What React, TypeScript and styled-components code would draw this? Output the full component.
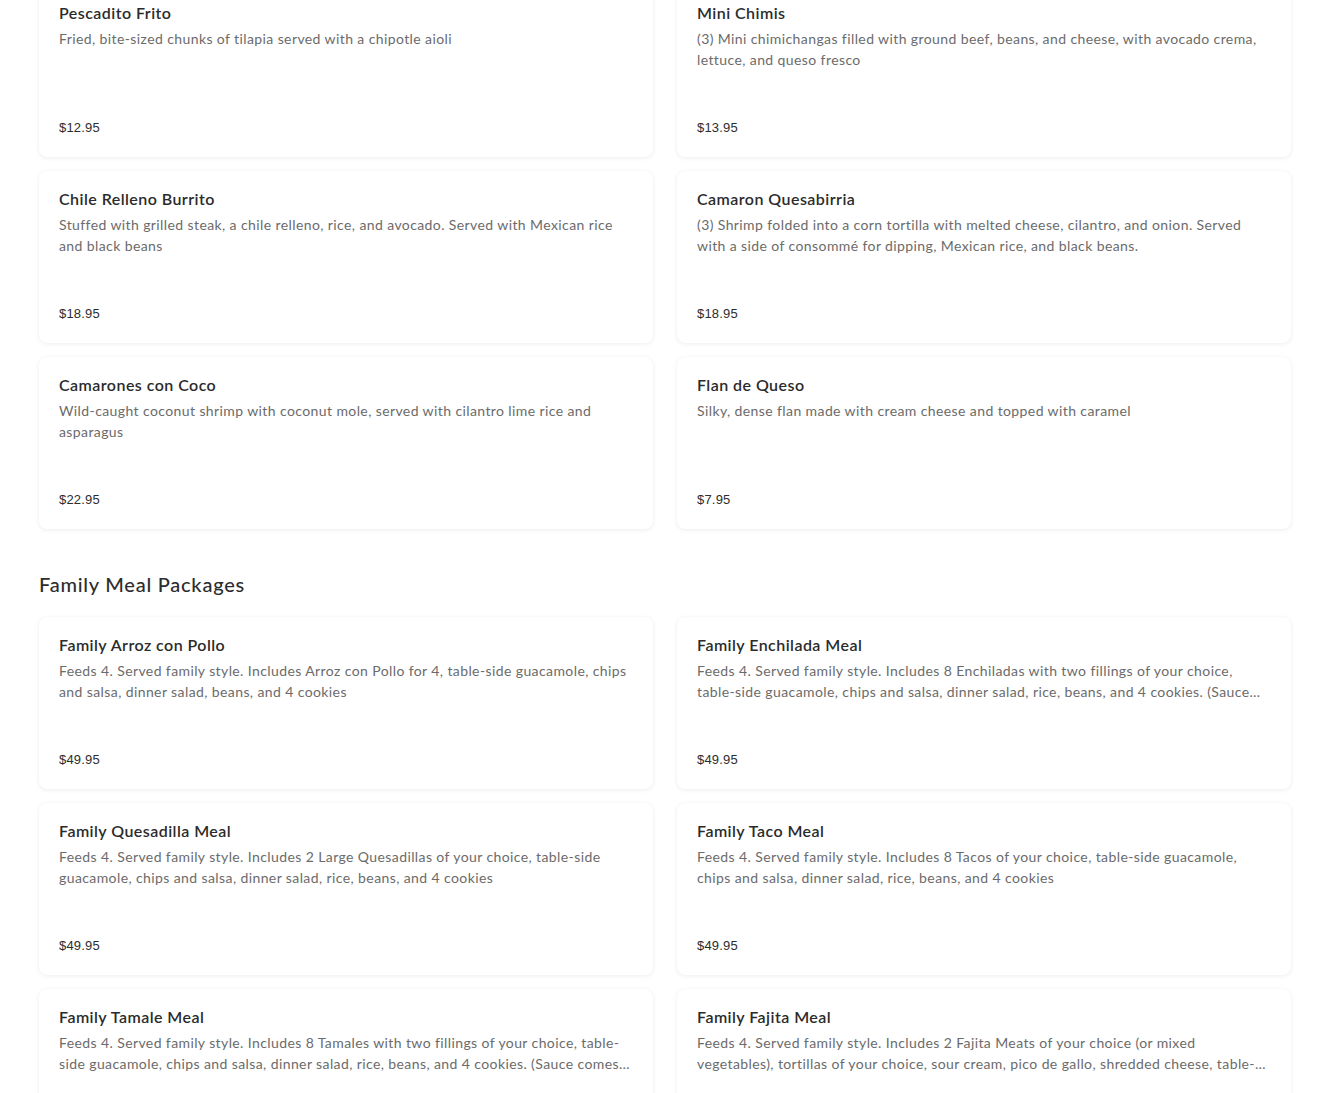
import React from "react";
import styled, { createGlobalStyle } from "styled-components";

const Global = createGlobalStyle`
  html, body { margin: 0; padding: 0; background: #ffffff; }
  body { font-family: "Lato", "Noto Sans", sans-serif; color: #2d2d2d; overflow: hidden; }
`;

const Page = styled.div`
  padding: 0 39px;
  margin-top: -15px;
  display: flex;
  flex-direction: column;
`;

const Section = styled.section`
  display: flex;
  flex-direction: column;
`;

const SectionTitle = styled.h2`
  margin: 41px 0 19px;
  font-size: 20px;
  line-height: 28px;
  font-weight: 500;
  letter-spacing: 0.75px;
  color: #2d2d2d;
`;

const Grid = styled.div`
  display: grid;
  grid-template-columns: 1fr 1fr;
  column-gap: 24px;
  row-gap: 14px;
`;

const Card = styled.div`
  height: 172px;
  box-sizing: border-box;
  padding: 16px 20px 19px;
  background: #fff;
  border-radius: 8px;
  box-shadow: 0 1px 5px rgba(0, 0, 0, 0.07), 0 0 1px rgba(0, 0, 0, 0.04);
  display: flex;
  flex-direction: column;
`;

const Title = styled.div`
  font-size: 16px;
  line-height: 24px;
  font-weight: 600;
  letter-spacing: 0.45px;
  color: #2b2b2b;
`;

const Desc = styled.div`
  margin-top: 3px;
  font-size: 14px;
  line-height: 21px;
  letter-spacing: 0.4px;
  color: #6b6b6b;
  display: -webkit-box;
  -webkit-line-clamp: 2;
  -webkit-box-orient: vertical;
  overflow: hidden;
`;

const Price = styled.div`
  margin-top: auto;
  font-family: "Liberation Sans", Arial, sans-serif;
  font-size: 13px;
  line-height: 20px;
  letter-spacing: 0.2px;
  color: #2d2d2d;
`;

type Item = { name: string; desc: string; price: string };

const top: Item[] = [
  { name: "Pescadito Frito", desc: "Fried, bite-sized chunks of tilapia served with a chipotle aioli", price: "$12.95" },
  { name: "Mini Chimis", desc: "(3) Mini chimichangas filled with ground beef, beans, and cheese, with avocado crema, lettuce, and queso fresco", price: "$13.95" },
  { name: "Chile Relleno Burrito", desc: "Stuffed with grilled steak, a chile relleno, rice, and avocado. Served with Mexican rice and black beans", price: "$18.95" },
  { name: "Camaron Quesabirria", desc: "(3) Shrimp folded into a corn tortilla with melted cheese, cilantro, and onion. Served with a side of consommé for dipping, Mexican rice, and black beans.", price: "$18.95" },
  { name: "Camarones con Coco", desc: "Wild-caught coconut shrimp with coconut mole, served with cilantro lime rice and asparagus", price: "$22.95" },
  { name: "Flan de Queso", desc: "Silky, dense flan made with cream cheese and topped with caramel", price: "$7.95" },
];

const family: Item[] = [
  { name: "Family Arroz con Pollo", desc: "Feeds 4. Served family style. Includes Arroz con Pollo for 4, table-side guacamole, chips and salsa, dinner salad, beans, and 4 cookies", price: "$49.95" },
  { name: "Family Enchilada Meal", desc: "Feeds 4. Served family style. Includes 8 Enchiladas with two fillings of your choice, table-side guacamole, chips and salsa, dinner salad, rice, beans, and 4 cookies. (Sauce comes on the side)", price: "$49.95" },
  { name: "Family Quesadilla Meal", desc: "Feeds 4. Served family style. Includes 2 Large Quesadillas of your choice, table-side guacamole, chips and salsa, dinner salad, rice, beans, and 4 cookies", price: "$49.95" },
  { name: "Family Taco Meal", desc: "Feeds 4. Served family style. Includes 8 Tacos of your choice, table-side guacamole, chips and salsa, dinner salad, rice, beans, and 4 cookies", price: "$49.95" },
  { name: "Family Tamale Meal", desc: "Feeds 4. Served family style. Includes 8 Tamales with two fillings of your choice, table-side guacamole, chips and salsa, dinner salad, rice, beans, and 4 cookies. (Sauce comes on the side)", price: "$49.95" },
  { name: "Family Fajita Meal", desc: "Feeds 4. Served family style. Includes 2 Fajita Meats of your choice (or mixed vegetables), tortillas of your choice, sour cream, pico de gallo, shredded cheese, table-side guacamole, chips and salsa, and 4 cookies", price: "$49.95" },
];

const MenuCard = ({ item }: { item: Item }) => (
  <Card>
    <Title>{item.name}</Title>
    <Desc>{item.desc}</Desc>
    <Price>{item.price}</Price>
  </Card>
);

export default function App() {
  return (
    <>
      <Global />
      <Page>
        <Section>
          <Grid>
            {top.map((i) => (
              <MenuCard key={i.name} item={i} />
            ))}
          </Grid>
        </Section>
        <Section>
          <SectionTitle>Family Meal Packages</SectionTitle>
          <Grid>
            {family.map((i) => (
              <MenuCard key={i.name} item={i} />
            ))}
          </Grid>
        </Section>
      </Page>
    </>
  );
}
